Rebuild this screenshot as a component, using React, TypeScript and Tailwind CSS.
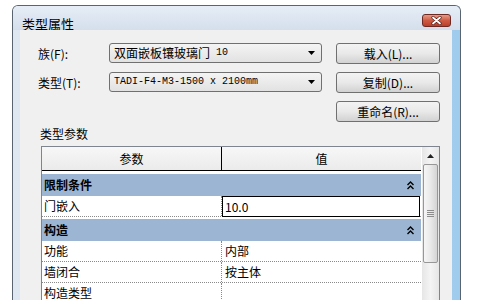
const mono = "font-['Liberation_Mono','Noto_Sans_CJK_SC',monospace]";

function Arrow() {
  return (
    <svg width="7" height="4" viewBox="0 0 7 4" className="shrink-0">
      <path d="M0 0H7L3.5 4Z" fill="#000" />
    </svg>
  );
}

function Collapse() {
  return (
    <svg width="7" height="9" viewBox="0 0 7 9">
      <path d="M0.5 4L3.5 1L6.5 4M0.5 8L3.5 5L6.5 8" fill="none" stroke="#000" strokeWidth="1.4" />
    </svg>
  );
}

function Combo({ children }: { children: React.ReactNode }) {
  return (
    <div className="h-[20px] flex items-center justify-between pl-[4px] pr-[6px] border border-[#707070] rounded-[3px] bg-gradient-to-b from-[#f4f4f4] to-[#e2e2e2]">
      <div className="flex items-center leading-none">{children}</div>
      <Arrow />
    </div>
  );
}

function Btn({ label }: { label: string }) {
  return (
    <div className="h-[21px] flex items-center justify-center border border-[#707070] rounded-[3px] bg-gradient-to-b from-[#f3f3f3] via-[#e9e9e9] to-[#d2d2d2] text-[12px] leading-none">
      {label}
    </div>
  );
}

function Group({ title, first }: { title: string; first?: boolean }) {
  return (
    <div
      className={`h-[22px] flex items-center justify-between pl-[2px] pr-[7px] bg-[#9bb5d2] font-bold ${
        first ? 'mt-[3px]' : 'mt-[2px]'
      }`}
    >
      <span>{title}</span>
      <Collapse />
    </div>
  );
}

function Row({ name, value, selected }: { name: string; value?: string; selected?: boolean }) {
  return (
    <div className="h-[21px] flex border-b border-dotted border-[#8a8a8a] bg-white">
      <div className="w-[180px] pl-[2px] flex items-center border-r border-dotted border-[#8a8a8a]">{name}</div>
      {selected ? (
        <div className="flex-1 -mb-[1px] mr-[1px] pl-[2px] flex items-center border border-black bg-white">{value}</div>
      ) : (
        <div className="flex-1 pl-[3px] flex items-center">{value}</div>
      )}
    </div>
  );
}

function Scrollbar() {
  return (
    <div className="w-[17px] ml-[1px] flex flex-col bg-gradient-to-r from-[#e6e6e6] via-[#f4f4f4] to-[#e6e6e6]">
      <div className="h-[17px] flex items-center justify-center">
        <svg width="7" height="4" viewBox="0 0 7 4">
          <path d="M0 4H7L3.5 0Z" fill="#222" />
        </svg>
      </div>
      <div className="mx-[1px] h-[99px] rounded-[2px] border border-[#979797] bg-gradient-to-r from-[#f6f6f6] via-[#e9e9e9] to-[#d4d4d4] flex flex-col items-center justify-center gap-[1px]">
        <div className="w-[7px] h-px bg-[#8c8c8c]" />
        <div className="w-[7px] h-px bg-[#8c8c8c]" />
        <div className="w-[7px] h-px bg-[#8c8c8c]" />
        <div className="w-[7px] h-px bg-[#8c8c8c]" />
      </div>
    </div>
  );
}

export default function App() {
  return (
    <div className="w-[480px] h-[307px] bg-white overflow-hidden font-['Noto_Sans_CJK_SC','Noto_Sans',sans-serif] text-[12px] text-black">
      <div className="ml-[12px] mt-[5px] w-[449px] h-[295px] flex flex-col rounded-t-[6px] border-x border-t border-[#5a6470] bg-gradient-to-r from-[#dfe7f1] via-[#d6e1ee] to-[#9fcbec] overflow-hidden">
        {/* title bar */}
        <div className="h-[26px] flex justify-between bg-gradient-to-b from-[#e6edf6] to-[#d4dfec]">
          <div className="pl-[9px] pt-[11px] text-[13px] leading-[13px]">类型属性</div>
          <div className="mt-[8px] mr-[9px] w-[29px] h-[13px] rounded-[3px] border border-[#6e2a22] bg-gradient-to-b from-[#e49a88] via-[#cf5a44] to-[#b9412c] flex items-center justify-center">
            <svg width="11" height="9" viewBox="0 0 11 9">
              <path d="M2 1.5L9 7.5M9 1.5L2 7.5" stroke="#5a2018" strokeWidth="3.2" strokeLinecap="round" />
              <path d="M2 1.5L9 7.5M9 1.5L2 7.5" stroke="#fff" strokeWidth="1.8" strokeLinecap="round" />
            </svg>
          </div>
        </div>

        {/* client area */}
        <div className="flex-1 ml-[7px] mr-[8px] flex flex-col bg-[#f0f0f0] pt-[13px] pl-[18px] pr-[12px]">
          <div className="flex">
            <div className="w-[71px] flex flex-col gap-[8px]">
              <div className="h-[21px] flex items-center">族(F):</div>
              <div className="h-[21px] flex items-center">类型(T):</div>
            </div>
            <div className="w-[213px] flex flex-col gap-[9px]">
              <Combo>
                <span className="text-[12px]">双面嵌板镶玻璃门</span>
                <span className={`${mono} text-[10px]`}>&nbsp;10</span>
              </Combo>
              <Combo>
                <span className={`${mono} text-[10px]`}>TADI-F4-M3-1500 x 2100mm</span>
              </Combo>
            </div>
            <div className="ml-[14px] w-[104px] flex flex-col gap-[8px]">
              <Btn label="载入(L)..." />
              <Btn label="复制(D)..." />
              <Btn label="重命名(R)..." />
            </div>
          </div>

          <div className="mt-[4px] ml-[2px] h-[16px] leading-[16px]">类型参数</div>

          <div className="mt-[4px] ml-[3px] w-[399px] flex-1 flex border-x border-t border-[#7f858e] bg-white">
            <div className="w-[380px] flex flex-col">
              <div className="h-[24px] flex border-b border-black bg-gradient-to-b from-[#f7f7f7] to-[#ebebeb]">
                <div className="w-[180px] flex items-center justify-center border-r border-black">参数</div>
                <div className="flex-1 flex items-center justify-center">值</div>
              </div>
              <Group title="限制条件" first />
              <Row name="门嵌入" value="10.0" selected />
              <Group title="构造" />
              <Row name="功能" value="内部" />
              <Row name="墙闭合" value="按主体" />
              <Row name="构造类型" />
            </div>
            <Scrollbar />
          </div>
        </div>
      </div>
    </div>
  );
}
